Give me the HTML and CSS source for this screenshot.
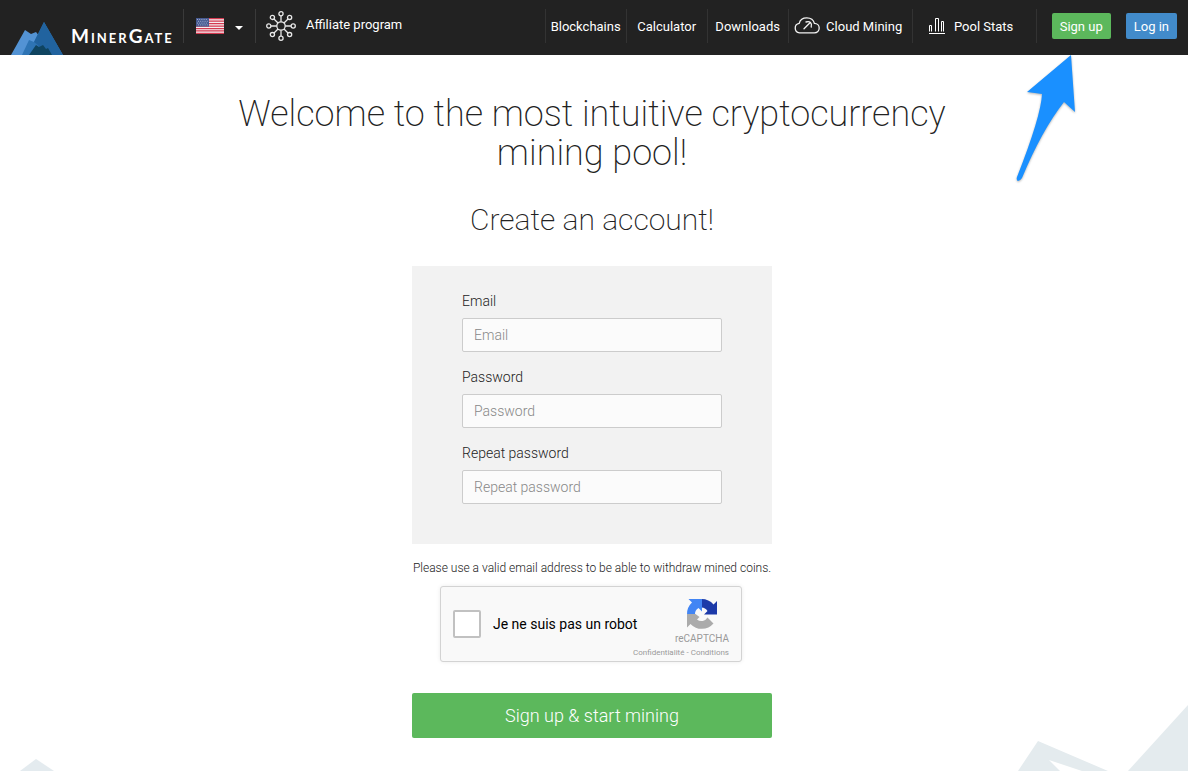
FILE: index.html
```html
<!DOCTYPE html>
<html lang="en">
<head>
<meta charset="utf-8">
<meta name="viewport" content="width=device-width, initial-scale=1">
<title>MinerGate – Sign up</title>
<link rel="stylesheet" href="styles.css">
</head>
<body>
<header class="topbar">
  <a class="brand" href="#">
    <svg class="brand-mark" width="54" height="33" viewBox="0 0 54 33" aria-hidden="true">
      <path fill="#5393d4" d="M1 33 15 8l6 4 5-2 4 5-8 18z"/>
      <path fill="#2e74b4" d="M12 33 19 18l5 2L34 0l19 33z"/>
      <path fill="#21639f" d="m24 20 10-20 19 33H34l-6-10z"/>
      <path fill="#0f4460" d="m19 33 7-10 3 2 4-2 3 4 2-1 4 7z"/>
    </svg>
    <span class="brand-name">MinerGate</span>
  </a>
  <button class="language" type="button" aria-label="Language">
    <svg width="28" height="16" viewBox="0 0 28 16" aria-hidden="true">
      <path fill="#f4eef0" d="M0 0h28v16H0z"/>
      <path stroke="#d43a50" stroke-width="1.25" d="M0 .6h28M0 3.1h28M0 5.5h28M0 8h28M0 10.5h28M0 12.9h28M0 15.4h28"/>
      <path fill="#465a91" d="M0 0h13v8.6H0z"/>
      <path stroke="#b9c2dc" stroke-width=".8" stroke-dasharray="1 1.2" d="M1 1.5h11M2 3.3h10M1 5.1h11M2 6.9h10"/>
    </svg>
    <span class="caret"></span>
  </button>
  <a class="affiliate" href="#">
    <svg width="30" height="30" viewBox="0 0 30 30" fill="none" stroke="#e8e8e8" stroke-width="1.3" aria-hidden="true">
      <circle cx="15" cy="15" r="4.2"/>
      <path d="M15 10.8V5M15 19.200V25M10.800 15H5M19.200 15H25M12 12 8 8M18 12l4-4M12 18l-4 4M18 18l4 4"/>
      <circle cx="15" cy="2.800" r="2.100"/><circle cx="15" cy="27.200" r="2.100"/>
      <circle cx="2.800" cy="15" r="2.100"/><circle cx="27.200" cy="15" r="2.100"/>
      <circle cx="6.400" cy="6.400" r="2.100"/><circle cx="23.600" cy="6.400" r="2.100"/>
      <circle cx="6.400" cy="23.600" r="2.100"/><circle cx="23.600" cy="23.600" r="2.100"/>
    </svg>
    <span>Affiliate program</span>
  </a>
  <nav class="menu">
    <a class="menu-item" href="#">Blockchains</a>
    <a class="menu-item" href="#">Calculator</a>
    <a class="menu-item" href="#">Downloads</a>
    <a class="menu-item menu-item-cloud" href="#">
      <svg width="26" height="17" viewBox="0 0 26 17" fill="none" stroke="#f2f2f2" stroke-width="1.300" stroke-linecap="round" aria-hidden="true">
        <path d="M5.500 15.800a4.800 4.800 0 0 1-.3-9.500C6 3 9 .8 12.800.8c4 0 6.800 2.200 7.600 5.600 2.800 0 4.800 2 4.800 4.700s-2 4.700-4.800 4.700z"/>
        <path d="m10 11.800 6-6M12 5q3-.8 4.500.5T17.200 10"/>
      </svg>
      Cloud Mining
    </a>
    <a class="menu-item menu-item-stats" href="#">
      <svg width="16" height="16" viewBox="0 0 16 16" fill="none" stroke="#fff" aria-hidden="true">
        <path d="M.5 13.500v-6h2v6M6.500 13.500V.5h3v13M12.500 13.500v-10h2v10M0 15.500h16"/>
      </svg>
      Pool Stats
    </a>
  </nav>
  <div class="actions">
    <button class="btn btn-signup" type="button">Sign up</button>
    <button class="btn btn-login" type="button">Log in</button>
  </div>
</header>

<svg class="pointer" width="62" height="130" viewBox="0 0 62 130" aria-hidden="true">
  <path fill="#1a90ff" d="M56 1 12 38q8 1 15 2Q26 62 2 123q-1 3 1 4 2 0 4-3Q27 76 49 48l11 10z"/>
</svg>

<main class="page">
  <h1 class="title">Welcome to the most intuitive cryptocurrency mining pool!</h1>
  <h2 class="subtitle">Create an account!</h2>
  <form class="signup">
    <div class="fields">
      <div class="field">
        <label for="email">Email</label>
        <input id="email" type="email" placeholder="Email">
      </div>
      <div class="field">
        <label for="password">Password</label>
        <input id="password" type="password" placeholder="Password">
      </div>
      <div class="field">
        <label for="repeat">Repeat password</label>
        <input id="repeat" type="password" placeholder="Repeat password">
      </div>
    </div>
    <p class="hint">Please use a valid email address to be able to withdraw mined coins.</p>
    <div class="captcha">
      <input class="captcha-box" id="robot" type="checkbox">
      <label class="captcha-label" for="robot">Je ne suis pas un robot</label>
      <div class="captcha-brand">
        <svg width="32" height="32" viewBox="0 0 64 64" aria-hidden="true">
          <path fill="#1c3aa9" d="M62 33V6l-7 7A31 31 0 0 0 31 2v17a14 14 0 0 1 12 7l-7 7z"/>
          <path fill="#4285f4" d="M32 2H5l7 7A31 31 0 0 0 2 33h16a14 14 0 0 1 7-13l7 7z"/>
          <path fill="#ababab" d="M2 32v27l7-7a31 31 0 0 0 46-1L43 39a14 14 0 0 1-21 4l5-5-8-6z"/>
        </svg>
        <span class="captcha-name">reCAPTCHA</span>
        <span class="captcha-links"><a href="#">Confidentialité</a> - <a href="#">Conditions</a></span>
      </div>
    </div>
    <button class="submit" type="submit">Sign up &amp; start mining</button>
  </form>
</main>

<svg class="peak peak-left" width="80" height="12" viewBox="0 0 80 12" aria-hidden="true">
  <path fill="#e4ebef" d="M20 12 36 0l18 12z"/>
</svg>
<svg class="peak peak-right" width="170" height="66" viewBox="0 0 170 66" aria-hidden="true">
  <path fill="#e4ebee" d="m0 66 20-30 70 30H64L31 55l11 11zM110 66l60-66v66z"/>
</svg>
</body>
</html>
```

FILE: styles.css
```css
* {
  box-sizing: border-box;
}

body {
  position: relative;
  min-height: 100vh;
  margin: 0;
  background: #fff;
  color: #222;
  font-family: Roboto, "Liberation Sans", sans-serif;
  font-size: 14px;
  line-height: 20px;
}

a {
  color: inherit;
  text-decoration: none;
}

button,
input {
  margin: 0;
  font: inherit;
}

button {
  cursor: pointer;
}

/* Top bar */

.topbar {
  display: flex;
  align-items: flex-start;
  height: 55px;
  padding-right: 11px;
  background: #222;
  color: #fff;
  font-size: 13px;
}

.brand {
  display: flex;
  align-items: flex-end;
  height: 55px;
  padding-left: 10px;
  gap: 7px;
}

.brand-mark {
  flex: none;
}

.brand-name {
  width: 112px;
  padding-bottom: 7px;
  font-family: Lato, sans-serif;
  font-size: 19px;
  font-weight: 700;
  font-variant: small-caps;
  letter-spacing: 2px;
  line-height: 24px;
}

.language {
  display: flex;
  align-items: center;
  gap: 11px;
  width: 72px;
  height: 34px;
  margin-top: 9px;
  padding: 0 0 0 12px;
  border: 0;
  border-left: 1px solid #3a3a3a;
  background: none;
}

.caret {
  margin-top: 4px;
  border: 4px solid transparent;
  border-top-color: #fff;
  border-bottom: 0;
}

.affiliate {
  display: flex;
  gap: 10px;
  height: 34px;
  margin-top: 9px;
  padding-left: 10px;
  border-left: 1px solid #3a3a3a;
  line-height: 32px;
  white-space: nowrap;
}

.affiliate svg {
  margin-top: 2px;
}

.menu {
  display: flex;
  margin-top: 9px;
  margin-left: auto;
  line-height: 34px;
  white-space: nowrap;
}

.menu-item {
  display: flex;
  align-items: center;
  justify-content: center;
  gap: 6px;
  width: 81px;
  height: 34px;
  padding-top: 1px;
  border-left: 1px solid #333;
}

.menu-item-cloud {
  width: 124px;
  padding-right: 4px;
}

.menu-item-stats {
  gap: 9px;
  width: 124px;
  padding-right: 6px;
}

.menu-item-stats svg,
.menu-item-cloud svg {
  margin-bottom: 2px;
}

.actions {
  display: flex;
  gap: 15px;
  height: 34px;
  margin-top: 9px;
  padding: 4px 0 0 15px;
  border-left: 1px solid #333;
}

.btn {
  height: 26px;
  padding: 1px 8px 0;
  border: 0;
  border-radius: 2px;
  color: #fff;
  white-space: nowrap;
}

.btn-signup {
  background: #5cb85c;
}

.btn-login {
  background: #428bca;
}

.pointer {
  position: absolute;
  top: 54px;
  right: 111px;
  filter: drop-shadow(0 1px 1px rgba(0, 0, 0, .3));
}

/* Sign-up page */

.page {
  display: flex;
  flex-direction: column;
  align-items: center;
  padding: 40px 4px 32px 0;
}

.title,
.subtitle {
  margin: 0;
  font-weight: 200;
  text-align: center;
}

.title {
  max-width: 760px;
  font-size: 36px;
  line-height: 39px;
}

.subtitle {
  margin-top: 30px;
  font-size: 30px;
  line-height: 34px;
}

.signup {
  width: 100%;
  max-width: 360px;
  margin-top: 29px;
}

.fields {
  display: flex;
  flex-direction: column;
  gap: 15px;
  padding: 25px 50px 40px;
  background: #f2f2f2;
  font-weight: 300;
}

.field {
  display: flex;
  flex-direction: column;
  gap: 7px;
}

.field input {
  width: 100%;
  height: 34px;
  padding: 0 11px;
  border: 1px solid #ccc;
  border-radius: 2px;
  background: #fbfbfb;
}

.field input::placeholder {
  color: #888;
  opacity: 1;
}

.hint {
  margin: 14px 0 8px;
  font-size: 12px;
  font-weight: 300;
  line-height: 20px;
  text-align: center;
  white-space: nowrap;
}

.captcha {
  display: flex;
  align-items: center;
  width: 302px;
  height: 76px;
  margin-left: 28px;
  padding: 0 12px;
  border: 1px solid #d3d3d3;
  border-radius: 3px;
  background: #f9f9f9;
  box-shadow: 0 0 4px rgba(0, 0, 0, .08);
  color: #000;
}

.captcha-box {
  flex: none;
  width: 28px;
  height: 28px;
  margin: 0;
  border: 2px solid #c1c1c1;
  border-radius: 2px;
  background: #fff;
  appearance: none;
}

.captcha-label {
  margin-left: 12px;
  white-space: nowrap;
}

.captcha-brand {
  display: flex;
  flex: 1;
  flex-direction: column;
  align-items: flex-end;
  min-width: 0;
  padding-top: 8px;
  color: #999;
  font-size: 10px;
  line-height: 18px;
}

.captcha-brand svg {
  margin-right: 11px;
}

.captcha-links {
  font-size: 8px;
  line-height: 10px;
  white-space: nowrap;
}

.submit {
  display: block;
  width: 100%;
  height: 45px;
  margin-top: 31px;
  border: 0;
  border-radius: 2px;
  background: #5cb85c;
  color: #fff;
  font-size: 18px;
  font-weight: 300;
}

/* Background mountains */

.peak {
  position: absolute;
  bottom: 0;
  z-index: -1;
}

.peak-left {
  left: 0;
}

.peak-right {
  right: 0;
}
```
